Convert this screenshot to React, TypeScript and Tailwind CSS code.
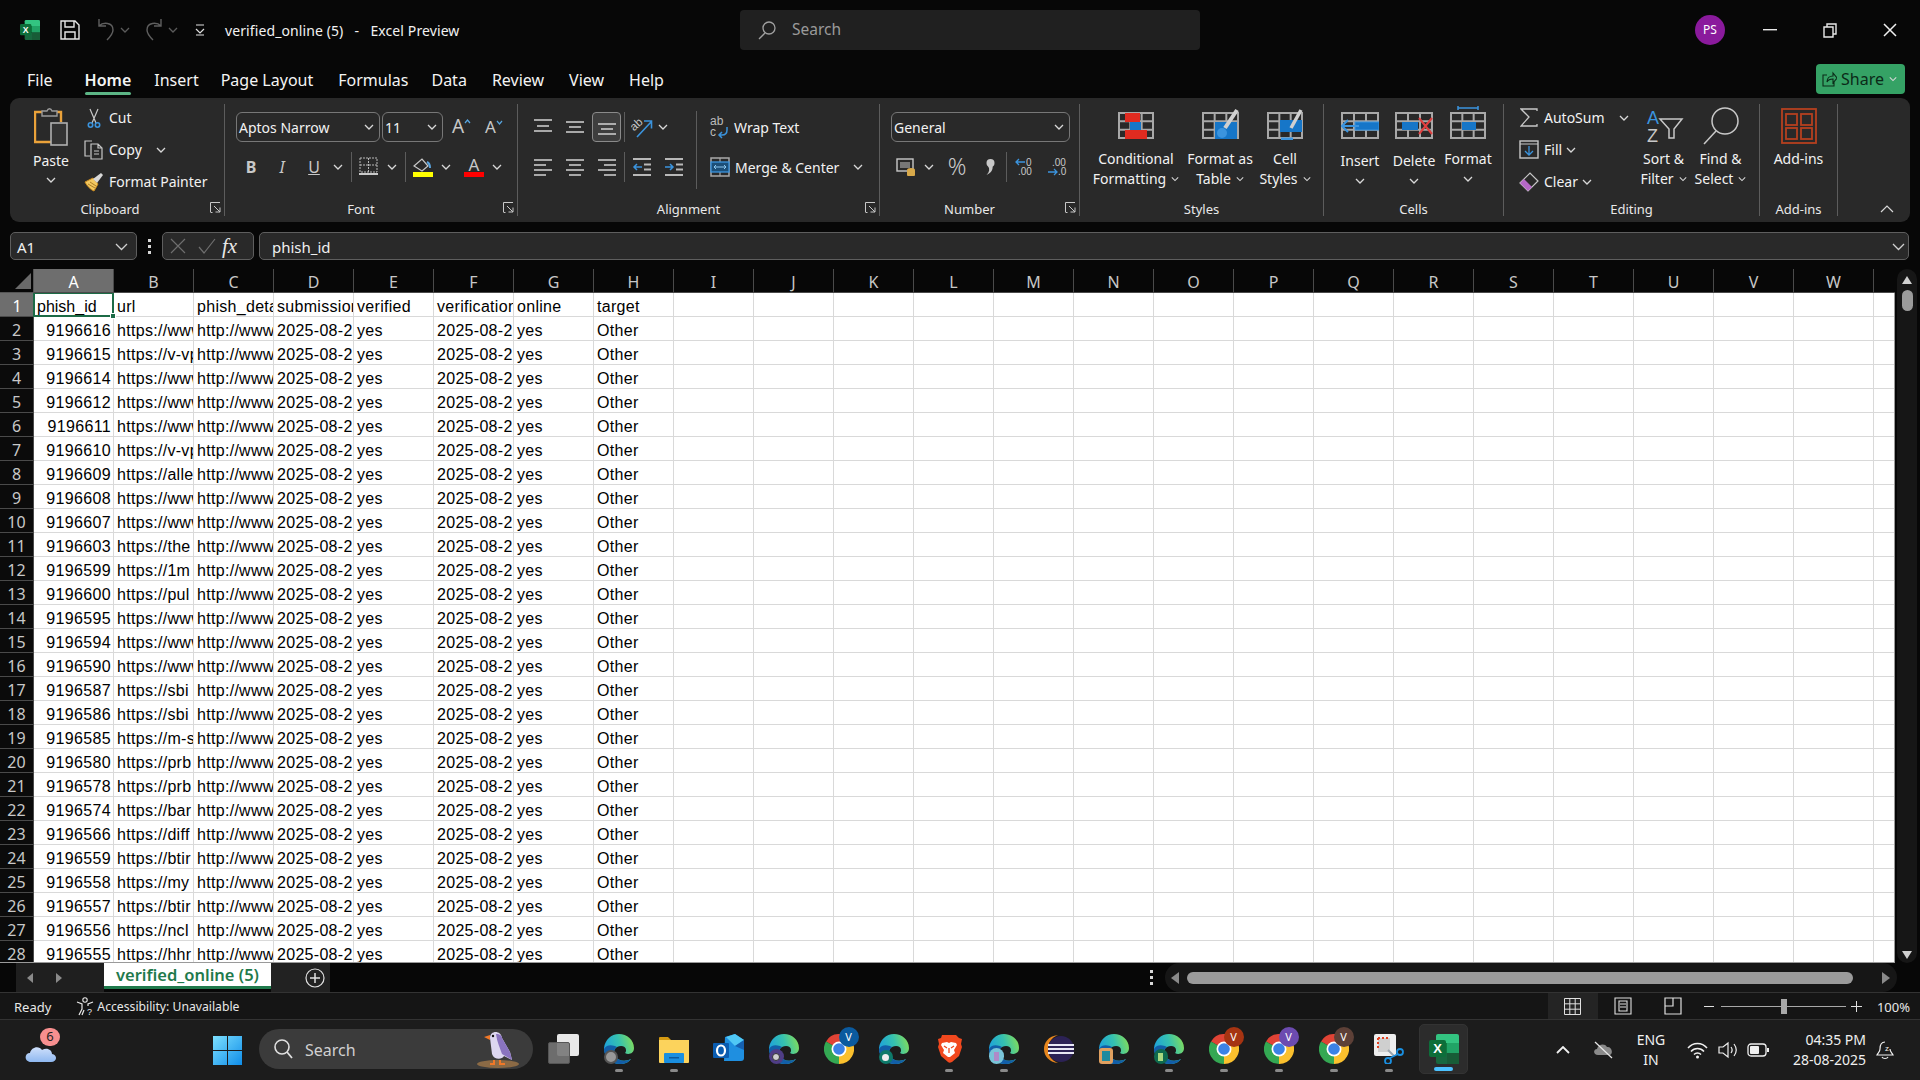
import type { ReactNode } from "react";

const rows: [string, string][] = [
  ["9196616", "https://www"], ["9196615", "https://v-vp"], ["9196614", "https://www"], ["9196612", "https://www"],
  ["9196611", "https://www"], ["9196610", "https://v-vp"], ["9196609", "https://alle"], ["9196608", "https://www"],
  ["9196607", "https://www"], ["9196603", "https://the"], ["9196599", "https://1m"], ["9196600", "https://pul"],
  ["9196595", "https://www"], ["9196594", "https://www"], ["9196590", "https://www"], ["9196587", "https://sbi"],
  ["9196586", "https://sbi"], ["9196585", "https://m-s"], ["9196580", "https://prb"], ["9196578", "https://prb"],
  ["9196574", "https://bar"], ["9196566", "https://diff"], ["9196559", "https://btir"], ["9196558", "https://my"],
  ["9196557", "https://btir"], ["9196556", "https://ncl"], ["9196555", "https://hhr"],
];
const headerCells = ["phish_id", "url", "phish_detail", "submission", "verified", "verification", "online", "target"];
const letters = "ABCDEFGHIJKLMNOPQRSTUVW".split("");
const blanks = Array.from({ length: 15 }, (_, i) => i);

function Chev({ className = "" }: { className?: string }) {
  return (
    <svg width="10" height="6" viewBox="0 0 10 6" className={className}>
      <path d="M1 1l4 4 4-4" fill="none" stroke="#d8d8d8" strokeWidth="1.3" />
    </svg>
  );
}

function ExcelLogo({ size = 20 }: { size?: number }) {
  return (
    <svg width={size} height={size} viewBox="0 0 30 30">
      <path d="M9 0h19a2 2 0 0 1 2 2v7H7V2a2 2 0 0 1 2-2z" fill="#33c481" />
      <rect x="18" y="9" width="12" height="10" fill="#21a366" />
      <rect x="7" y="9" width="11" height="10" fill="#107c41" />
      <rect x="18" y="19" width="12" height="11" fill="#185c37" />
      <path d="M7 19h11v11H9a2 2 0 0 1-2-2z" fill="#18683f" />
      <rect x="0" y="6" width="17" height="17" rx="2" fill="#0d6e3a" />
      <text x="8.5" y="19" textAnchor="middle" fontSize="13" fontWeight="700" fill="#fff" fontFamily="Liberation Sans">X</text>
    </svg>
  );
}

function Lines({ lines }: { lines: [number, number, number][] }) {
  return (
    <svg width="20" height="20" viewBox="0 0 20 20">
      {lines.map(([x1, x2, y]) => (
        <line key={y} x1={x1} x2={x2} y1={y} y2={y} stroke="#c8c8c8" strokeWidth="1.6" />
      ))}
    </svg>
  );
}

function GridBox({ children, w = 38, h = 30, stroke = "#a8a8a8" }: { children?: ReactNode; w?: number; h?: number; stroke?: string }) {
  return (
    <svg width={w} height={h + 6} viewBox={`0 -6 ${w} ${h + 6}`}>
      <g fill="none" stroke={stroke} strokeWidth="2">
        <rect x="1" y="1" width={w - 2} height={h - 3} />
        <path d={`M${(w - 2) / 3 + 1} 1V${h - 2}M${(2 * (w - 2)) / 3 + 1} 1V${h - 2}M1 ${(h - 3) / 3 + 1}H${w - 1}M1 ${(2 * (h - 3)) / 3 + 1}H${w - 1}`} />
      </g>
      {children}
    </svg>
  );
}

function Edge({ badge }: { badge: ReactNode }) {
  return (
    <div className="relative w-[30px] h-[30px]">
      <svg width="30" height="30" viewBox="0 0 30 30">
        <defs>
          <linearGradient id="edgeTop" x1="0" y1="0.6" x2="1" y2="0.3">
            <stop offset="0" stopColor="#1b9ee0" />
            <stop offset="0.55" stopColor="#35c1b0" />
            <stop offset="1" stopColor="#7fdc5e" />
          </linearGradient>
        </defs>
        <path d="M15 0C7 0 1 6 0 14c0 9 7 16 16 16 5 0 9-2 11-5-6 3-13 2-16-3-2-3-1-7 2-9 4-2 9-1 9 3 0 1 0 2-1 3 3 2 9 1 9-5C30 6 23 0 15 0z" fill="url(#edgeTop)" />
        <path d="M0 15c0 9 7 15 16 15 5 0 9-2 11-5-6 3-13 2-16-3-2-3-1-7 2-9C9 11 3 10 0 15z" fill="#125ea8" />
      </svg>
      <div className="absolute left-0 bottom-0">{badge}</div>
    </div>
  );
}

function Chrome({ badge, color }: { badge?: string; color?: string }) {
  return (
    <div className="relative w-[30px] h-[30px]">
      <svg width="30" height="30" viewBox="0 0 30 30">
        <path d="M15 15L2 7.5A15 15 0 0 1 28 7.5z" fill="#e04335" />
        <path d="M15 15L2 7.5A15 15 0 0 0 15 30z" fill="#34a853" />
        <path d="M15 15L28 7.5A15 15 0 0 1 15 30z" fill="#fbc02d" />
        <circle cx="15" cy="15" r="7.5" fill="#fff" />
        <circle cx="15" cy="15" r="5.8" fill="#3b82e6" />
      </svg>
      {badge && (
        <div className={`absolute -top-[7px] -right-[5px] w-[20px] h-[20px] rounded-full flex items-center justify-center text-[11px] text-white ${color}`}>
          {badge}
        </div>
      )}
    </div>
  );
}

function RibbonText({ children, className = "" }: { children: ReactNode; className?: string }) {
  return <span className={`text-[14px] text-[#f2f2f2] whitespace-nowrap ${className}`}>{children}</span>;
}

function Launcher() {
  return (
    <svg width="11" height="11" viewBox="0 0 11 11">
      <path d="M.5 10V.5H10M4 4l6 6M10 5.5V10H5.5M.5 10.5h2" fill="none" stroke="#c8c8c8" strokeWidth="1" />
    </svg>
  );
}

function Group({ w, label, launcher, pr = "", children }: { w: string; label: string; launcher?: boolean; pr?: string; children: ReactNode }) {
  return (
    <div className={`${w} h-[112px] border-r border-[#5c5c5c] flex flex-col shrink-0`}>
      <div className="h-[96px] shrink-0">{children}</div>
      <div className={`h-[18px] shrink-0 pt-[2px] flex items-center justify-center relative text-[13px] text-[#e8e8e8] ${pr}`}>
        {label}
        {launcher && (
          <div className="absolute right-[3px] top-[2px]">
            <Launcher />
          </div>
        )}
      </div>
    </div>
  );
}

function Combo({ w, children }: { w: string; children: string }) {
  return (
    <div className={`${w} h-[30px] rounded-[6px] border border-[#777] flex items-center justify-between pl-[2px] pr-[5px] pt-px`}>
      <RibbonText>{children}</RibbonText>
      <Chev />
    </div>
  );
}

function BigButton({ w, icon, lines, pt = "pt-[8px]", mt = "mt-[9px]" }: { w: string; icon: ReactNode; lines: ReactNode[]; pt?: string; mt?: string }) {
  return (
    <div className={`${w} flex flex-col items-center ${pt}`}>
      <div className="h-[28px] flex items-end">{icon}</div>
      <div className={`${mt} flex flex-col items-center leading-[20px]`}>
        {lines.map((l, i) => (
          <RibbonText key={i} className="leading-[20px] flex items-center gap-[5px]">{l}</RibbonText>
        ))}
      </div>
    </div>
  );
}

function TitleBar() {
  return (
    <div className="h-[60px] flex items-center">
      <div className="w-[740px] flex items-center pl-[20px]">
        <ExcelLogo />
        <svg width="20" height="20" viewBox="0 0 20 20" className="ml-[20px]">
          <path d="M1 1h14l4 4v14H1z M5 1v6h9V1 M5 19v-7h10v7" fill="none" stroke="#e8e8e8" strokeWidth="1.4" />
        </svg>
        <svg width="20" height="24" viewBox="0 0 20 24" className="ml-[16px]">
          <path d="M3 1v7h7 M3 8c4-4 14-4 14 4 0 4-3 7-6 10" fill="none" stroke="#5f5f5f" strokeWidth="1.4" />
        </svg>
        <Chev className="ml-[4px] opacity-40" />
        <svg width="20" height="24" viewBox="0 0 20 24" className="ml-[14px]">
          <path d="M17 1v7h-7 M17 8C13 4 3 4 3 12c0 4 3 7 6 10" fill="none" stroke="#5f5f5f" strokeWidth="1.4" />
        </svg>
        <Chev className="ml-[4px] opacity-40" />
        <svg width="10" height="12" viewBox="0 0 10 12" className="ml-[17px]">
          <path d="M1 1h8M1 5l4 4 4-4M1 11h8" fill="none" stroke="#e0e0e0" strokeWidth="1.2" />
        </svg>
        <span className="ml-[20px] pt-[2px] text-[14px] tracking-[0.1px] text-[#f2f2f2] whitespace-pre">verified_online (5)   -   Excel Preview</span>
      </div>
      <div className="w-[460px] h-[40px] rounded-[4px] bg-[#202020] flex items-center pl-[17px]">
        <svg width="20" height="20" viewBox="0 0 20 20">
          <circle cx="12" cy="8" r="6" fill="none" stroke="#a0a0a0" strokeWidth="1.3" />
          <path d="M8 13l-6 6" stroke="#a0a0a0" strokeWidth="1.3" />
        </svg>
        <span className="ml-[15px] text-[15.5px] text-[#9a9a9a]">Search</span>
      </div>
      <div className="flex-1 flex items-center pl-[495px]">
        <div className="w-[30px] h-[30px] rounded-full bg-[#8a1a9c] flex items-center justify-center text-[12px] text-white">PS</div>
        <svg width="14" height="2" viewBox="0 0 14 2" className="ml-[38px]">
          <rect width="14" height="1.4" fill="#e8e8e8" />
        </svg>
        <svg width="14" height="16" viewBox="0 0 14 16" className="ml-[46px]">
          <path d="M1 5h9v10H1z M4 5V2h9v10h-3" fill="none" stroke="#e8e8e8" strokeWidth="1.4" />
        </svg>
        <svg width="14" height="14" viewBox="0 0 14 14" className="ml-[46px]">
          <path d="M1 1l12 12M13 1L1 13" stroke="#f0f0f0" strokeWidth="1.5" />
        </svg>
      </div>
    </div>
  );
}

function TabRow() {
  const tabs: [string, string][] = [
    ["File", "ml-[27px]"], ["Home", "ml-[32px] font-semibold"], ["Insert", "ml-[23px]"], ["Page Layout", "ml-[22px]"],
    ["Formulas", "ml-[25px]"], ["Data", "ml-[23px]"], ["Review", "ml-[25px]"], ["View", "ml-[25px]"], ["Help", "ml-[25px]"],
  ];
  return (
    <div className="h-[38px] flex">
      {tabs.map(([t, c]) => (
        <div key={t} className={`${c} h-[35px] pt-[6px] flex items-center text-[16px] text-[#f4f4f4] relative`}>
          {t}
          {t === "Home" && <div className="absolute left-0 right-0 bottom-0 h-[3px] bg-[#5cb585] rounded-sm" />}
        </div>
      ))}
      <div className="ml-auto mr-[15px] mt-[4px] w-[89px] h-[30px] rounded-[4px] bg-[#35a265] flex items-center pl-[6px]">
        <svg width="15" height="16" viewBox="0 0 15 16">
          <path d="M5 4H1v11h11v-4M5 11c0-4 3-6 6-6V2l4 5-4 5V8c-3 0-5 1-6 3z" fill="none" stroke="#0b2a18" strokeWidth="1.1" />
        </svg>
        <span className="ml-[4px] text-[16px] text-[#0b2a18]">Share</span>
        <Chev className="ml-[5px] w-[8px]" />
      </div>
    </div>
  );
}

function SmallRow({ icon, children, after }: { icon: ReactNode; children: string; after?: ReactNode }) {
  return (
    <div className="h-[28px] flex items-center">
      <div className="w-[20px] flex justify-center">{icon}</div>
      <RibbonText className="ml-[5px]">{children}</RibbonText>
      {after}
    </div>
  );
}

function Ribbon() {
  return (
    <div className="mx-[10px] h-[124px] rounded-[9px] bg-[#292929] py-[6px] flex">
      <Group w="w-[215px]" label="Clipboard" launcher pr="pr-[14px]">
        <div className="flex">
          <div className="ml-[17px] w-[48px] flex flex-col items-center pt-[4px]">
            <svg width="34" height="38" viewBox="0 0 34 38">
              <path d="M9 4H1v30h16" fill="none" stroke="#eaa23a" strokeWidth="2.4" />
              <path d="M22 4h5v10" fill="none" stroke="#eaa23a" strokeWidth="2.4" />
              <path d="M8 8V3h5c1-3 4-3 5 0h5v5z" fill="#292929" stroke="#9a9a9a" strokeWidth="1.4" />
              <rect x="17" y="15" width="16" height="22" fill="#333" stroke="#b0b0b0" strokeWidth="1.6" />
            </svg>
            <RibbonText className="mt-[6px] leading-[18px]">Paste</RibbonText>
            <Chev className="mt-[7px]" />
          </div>
          <div className="ml-[9px] flex flex-col gap-1">
            <SmallRow icon={
              <svg width="14" height="20" viewBox="0 0 14 20">
                <path d="M3 1l6 14M11 1L5 15" stroke="#c8c8c8" strokeWidth="1.2" />
                <circle cx="3.5" cy="17" r="2.2" fill="none" stroke="#3b94de" strokeWidth="1.6" />
                <circle cx="10.5" cy="17" r="2.2" fill="none" stroke="#3b94de" strokeWidth="1.6" />
              </svg>
            }>Cut</SmallRow>
            <SmallRow icon={
              <svg width="20" height="20" viewBox="0 0 20 20">
                <path d="M8 1H1v15h5" fill="none" stroke="#c8c8c8" strokeWidth="1.2" />
                <path d="M7 4h7l4 4v11H7zM10 11h5M10 14h5M14 4v4h4" fill="none" stroke="#c8c8c8" strokeWidth="1.2" />
              </svg>
            } after={<Chev className="ml-[14px]" />}>Copy</SmallRow>
            <SmallRow icon={
              <svg width="20" height="20" viewBox="0 0 20 20">
                <path d="M1 10l8-4 5 6-4 7c-3-1-7-5-9-9z" fill="#f3c860" stroke="#c98a1e" strokeWidth="1" />
                <path d="M4 12l7 4M6 10l6 4" stroke="#9a6a18" strokeWidth=".8" />
                <path d="M9 7l8-6 2 2-6 8z" fill="#d8d8d8" />
              </svg>
            }>Format Painter</SmallRow>
          </div>
        </div>
      </Group>

      <Group w="w-[293px]" label="Font" launcher pr="pr-[20px]">
        <div className="flex pt-[8px] pl-[11px] items-center">
          <Combo w="w-[144px]">Aptos Narrow</Combo>
          <Combo w="w-[61px] ml-[2px]">11</Combo>
          <div className="ml-[9px] w-[20px] flex items-start text-[19px] leading-none text-[#c8c8c8]">
            A
            <svg width="7" height="5" viewBox="0 0 7 5" className="mt-[2px]"><path d="M1 4l2.5-3L6 4" fill="none" stroke="#58a6e0" strokeWidth="1.2" /></svg>
          </div>
          <div className="ml-[13px] w-[18px] flex items-start text-[17px] leading-none text-[#c8c8c8]">
            A
            <svg width="7" height="5" viewBox="0 0 7 5" className="mt-[2px]"><path d="M1 1l2.5 3L6 1" fill="none" stroke="#58a6e0" strokeWidth="1.2" /></svg>
          </div>
        </div>
        <div className="flex mt-[10px] pl-[11px] h-[30px] items-center">
          <div className="w-[30px] text-center text-[16px] font-bold text-[#c8c8c8]">B</div>
          <div className="w-[32px] text-center text-[16px] italic text-[#c8c8c8]">I</div>
          <div className="w-[32px] text-center text-[16px] text-[#c8c8c8] underline">U</div>
          <div className="w-[16px] flex justify-center"><Chev /></div>
          <div className="ml-[5px] w-px h-[30px] bg-[#5c5c5c]" />
          <svg width="19" height="19" viewBox="0 0 19 19" className="ml-[7px]">
            <path d="M1 1h17v14H1zM9.5 1v14M1 8h17" fill="none" stroke="#b8b8b8" strokeWidth="1" strokeDasharray="2 1" />
            <rect x="0" y="16" width="19" height="2" fill="#c8c8c8" />
          </svg>
          <div className="ml-[6px] w-[16px] flex justify-center"><Chev /></div>
          <div className="ml-[5px] w-px h-[30px] bg-[#5c5c5c]" />
          <svg width="20" height="20" viewBox="0 0 20 20" className="ml-[7px]">
            <path d="M1 9l8-7 6 7-6 5z" fill="none" stroke="#c8c8c8" strokeWidth="1.2" />
            <path d="M14 5c2 1 3 3 3 6" fill="none" stroke="#5aa5e0" strokeWidth="2" />
            <rect x="0" y="15" width="20" height="5" fill="#ffff00" />
          </svg>
          <div className="ml-[5px] w-[16px] flex justify-center"><Chev /></div>
          <div className="ml-[10px] w-[20px] h-[20px] relative text-center text-[17px] leading-[15px] text-[#c8c8c8]">
            A
            <div className="absolute left-0 right-0 bottom-0 h-[5px] bg-[#ff0000]" />
          </div>
          <div className="ml-[5px] w-[16px] flex justify-center"><Chev /></div>
        </div>
      </Group>

      <Group w="w-[362px]" label="Alignment" launcher pr="pr-[20px]">
        <div className="flex h-[96px]">
          <div className="w-[178px]">
            <div className="flex pt-[8px] pl-[9px] items-center">
              <div className="w-[32px] h-[30px] flex justify-center items-center"><Lines lines={[[1, 19, 3], [4, 16, 9], [1, 19, 14]]} /></div>
              <div className="w-[32px] h-[30px] flex justify-center items-center"><Lines lines={[[1, 19, 5], [4, 16, 10], [1, 19, 15]]} /></div>
              <div className="ml-px w-[29px] h-[30px] rounded-[4px] border border-[#8a8a8a] bg-[#3e3e3e] flex justify-center items-center"><Lines lines={[[1, 19, 7], [4, 16, 12], [1, 19, 17]]} /></div>
              <div className="ml-[3px] w-px h-[30px] bg-[#5c5c5c]" />
              <svg width="22" height="22" viewBox="0 0 22 22" className="ml-[6px]">
                <text x="0" y="12" fontSize="11.500" fill="#c8c8c8" fontFamily="Liberation Sans" transform="rotate(-42 6 10)">ab</text>
                <path d="M6 21L20 6M13 5h7.500v7.500" stroke="#3b94de" strokeWidth="1.6" fill="none" />
              </svg>
              <Chev className="ml-[5px]" />
            </div>
            <div className="flex mt-[10px] pl-[9px] items-center h-[30px]">
              <div className="w-[32px] flex justify-center"><Lines lines={[[1, 19, 3], [1, 13, 8], [1, 19, 13], [1, 13, 18]]} /></div>
              <div className="w-[32px] flex justify-center"><Lines lines={[[1, 19, 3], [4, 16, 8], [1, 19, 13], [4, 16, 18]]} /></div>
              <div className="w-[32px] flex justify-center"><Lines lines={[[1, 19, 3], [7, 19, 8], [1, 19, 13], [7, 19, 18]]} /></div>
              <div className="ml-px w-px h-[30px] bg-[#5c5c5c]" />
              <svg width="20" height="20" viewBox="0 0 20 20" className="ml-[7px]">
                <path d="M1 2h18M12 7.500h7M12 12.500h7M1 18h18" stroke="#b8b8b8" strokeWidth="1.800" />
                <path d="M10 10H2M5 7l-3 3 3 3" fill="none" stroke="#3b94de" strokeWidth="1.500" />
              </svg>
              <svg width="20" height="20" viewBox="0 0 20 20" className="ml-[12px]">
                <path d="M1 2h18M12 7.500h7M12 12.500h7M1 18h18" stroke="#b8b8b8" strokeWidth="1.800" />
                <path d="M1 10h8M6 7l3 3-3 3" fill="none" stroke="#3b94de" strokeWidth="1.500" />
              </svg>
            </div>
          </div>
          <div className="mt-[7px] w-px h-[78px] bg-[#5c5c5c]" />
          <div className="ml-[12px]">
            <div className="flex pt-[8px] h-[38px] items-center">
              <svg width="22" height="24" viewBox="0 0 22 24">
                <text x="1" y="10" fontSize="12" fill="#bcbcbc" fontFamily="Liberation Sans">ab</text>
                <text x="1" y="21" fontSize="12" fill="#bcbcbc" fontFamily="Liberation Sans">c</text>
                <path d="M18 12v3c0 3-2 5-5 5h-3M13 17l-3 3 3 3" fill="none" stroke="#3b94de" strokeWidth="1.500" />
              </svg>
              <RibbonText className="ml-[3px] pt-[2px]">Wrap Text</RibbonText>
            </div>
            <div className="flex mt-[10px] h-[30px] items-center">
              <svg width="20" height="20" viewBox="0 0 20 20" className="ml-px">
                <rect x="1" y="1" width="18" height="18" fill="none" stroke="#a8a8a8" strokeWidth="1.500" />
                <path d="M10 1v4M10 15v4" stroke="#a8a8a8" strokeWidth="1.200" />
                <rect x="1" y="5" width="18" height="10" fill="#1c4f78" stroke="#3b94de" strokeWidth="1.300" />
                <path d="M4 10h12M6 8l-2 2 2 2M14 8l2 2-2 2" fill="none" stroke="#8cc8f0" strokeWidth="1" />
              </svg>
              <RibbonText className="ml-[5px] pt-[2px] text-[14.5px]">Merge &amp; Center</RibbonText>
              <Chev className="ml-[14px]" />
            </div>
          </div>
        </div>
      </Group>

      <Group w="w-[200px]" label="Number" launcher pr="pr-[20px]">
        <div className="pt-[8px] pl-[11px]"><Combo w="w-[179px]">General</Combo></div>
        <div className="flex mt-[10px] h-[30px] items-center">
          <svg width="20" height="20" viewBox="0 0 20 20" className="ml-[16px]">
            <rect x="1" y="2" width="16" height="12" fill="none" stroke="#c8c8c8" strokeWidth="1.4" />
            <rect x="4" y="5" width="10" height="6" fill="#777" />
            <ellipse cx="15" cy="13" rx="4" ry="2" fill="#d8a94a" />
            <rect x="11" y="13" width="8" height="6" rx="1" fill="#d8a94a" />
          </svg>
          <div className="ml-[5px] w-[16px] flex justify-center"><Chev /></div>
          <div className="ml-[10px] w-[20px] text-center text-[23px] font-light leading-none text-[#c8c8c8]">%</div>
          <svg width="11" height="20" viewBox="0 0 11 20" className="ml-[18px]">
            <circle cx="5.500" cy="6" r="4" fill="#c8c8c8" />
            <path d="M6.500 6c3 5 0 10-5 12 3-3 3.500-6 1.500-9z" fill="#c8c8c8" />
          </svg>
          <div className="ml-[10px] w-px h-[30px] bg-[#5c5c5c]" />
          <svg width="20" height="20" viewBox="0 0 20 20" className="ml-[8px]">
            <text x="11" y="8.500" fontSize="10" fill="#c8c8c8" fontFamily="Liberation Sans">0</text>
            <text x="3" y="18" fontSize="10" fill="#c8c8c8" fontFamily="Liberation Sans">.00</text>
            <path d="M10 5H1M4 2L1 5l3 3" fill="none" stroke="#3b94de" strokeWidth="1.3" />
          </svg>
          <svg width="20" height="20" viewBox="0 0 20 20" className="ml-[12px]">
            <text x="5" y="8.500" fontSize="10" fill="#c8c8c8" fontFamily="Liberation Sans">.00</text>
            <text x="11" y="18" fontSize="10" fill="#c8c8c8" fontFamily="Liberation Sans">.0</text>
            <path d="M1 15h9M7 12l3 3-3 3" fill="none" stroke="#3b94de" strokeWidth="1.3" />
          </svg>
        </div>
      </Group>

      <Group w="w-[244px]" label="Styles">
        <div className="flex pl-[8px]">
          <BigButton w="w-[96px]" icon={
            <GridBox w={36} h={28}>
              <rect x="7" y="1" width="15" height="9" fill="#e02b20" />
              <rect x="12" y="10" width="11" height="8" fill="#1676c8" />
              <rect x="7" y="18" width="22" height="9" fill="#e02b20" />
            </GridBox>
          } lines={["Conditional", <>Formatting <Chev className="w-[8px]" /></>]} />
          <BigButton w="w-[72px]" icon={
            <GridBox w={37} h={28}>
              <rect x="13" y="10" width="22" height="17" fill="#1676c8" />
              <path d="M35-2L23 16" stroke="#d0d0d0" strokeWidth="4" />
              <circle cx="20" cy="21" r="5" fill="#3b94de" />
            </GridBox>
          } lines={["Format as", <>Table <Chev className="w-[8px]" /></>]} />
          <BigButton w="w-[58px]" icon={
            <GridBox w={36} h={28}>
              <rect x="13" y="8" width="22" height="12" fill="#1676c8" />
              <path d="M34-2L24 16" stroke="#d0d0d0" strokeWidth="3.5" />
              <path d="M14 27h12" stroke="#3b94de" strokeWidth="3" />
            </GridBox>
          } lines={["Cell", <>Styles <Chev className="w-[8px]" /></>]} />
        </div>
      </Group>

      <Group w="w-[180px]" label="Cells">
        <div className="flex pl-[9px]">
          <BigButton w="w-[54px]" mt="mt-[11px]" icon={
            <GridBox w={38} h={28}>
              <rect x="14" y="10" width="24" height="8" fill="#1676c8" stroke="#3b94de" />
              <path d="M18 14H1M7 8l-6 6 6 6" fill="none" stroke="#3b94de" strokeWidth="2" />
            </GridBox>
          } lines={["Insert", <Chev className="mt-[7px]" />]} />
          <BigButton w="w-[54px]" mt="mt-[11px]" icon={
            <GridBox w={38} h={28}>
              <rect x="7" y="10" width="16" height="8" fill="#1676c8" />
              <path d="M24 6l13 16M37 6L24 22" stroke="#e04040" strokeWidth="2" />
            </GridBox>
          } lines={["Delete", <Chev className="mt-[7px]" />]} />
          <BigButton w="w-[54px]" icon={
            <GridBox w={36} h={28}>
              <rect x="12" y="10" width="14" height="8" fill="#1676c8" />
              <path d="M8-4H28M8-6V-2M28-6V-2" stroke="#3b94de" strokeWidth="1.5" fill="none" />
            </GridBox>
          } lines={["Format", <Chev className="mt-[7px]" />]} />
        </div>
      </Group>

      <Group w="w-[256px]" label="Editing">
        <div className="flex">
          <div className="ml-[15px] w-[117px] flex flex-col gap-1">
            <SmallRow icon={
              <svg width="18" height="19" viewBox="0 0 18 19">
                <path d="M17 3V1H1l8 8-8 9h16v-2" fill="none" stroke="#c8c8c8" strokeWidth="1.3" />
              </svg>
            } after={<Chev className="ml-[14px]" />}>AutoSum</SmallRow>
            <SmallRow icon={
              <svg width="20" height="19" viewBox="0 0 20 19">
                <rect x="1" y="1" width="18" height="17" fill="none" stroke="#c8c8c8" strokeWidth="1.4" />
                <path d="M1 4h18" stroke="#c8c8c8" />
                <path d="M10 6v9M6 11l4 4 4-4" fill="none" stroke="#3b94de" strokeWidth="1.3" />
              </svg>
            } after={<Chev className="ml-[4px]" />}>Fill</SmallRow>
            <SmallRow icon={
              <svg width="20" height="20" viewBox="0 0 20 20">
                <path d="M1 11L11 1l8 8-10 10z" fill="none" stroke="#c8c8c8" strokeWidth="1.2" />
                <path d="M1 11l4-4 8 8-4 4z" fill="#b668c8" />
              </svg>
            } after={<Chev className="ml-[4px]" />}>Clear</SmallRow>
          </div>
          <BigButton w="w-[55px]" pt="pt-[11px]" mt="mt-[6px]" icon={
            <svg width="38" height="34" viewBox="0 0 38 34" className="overflow-visible">
              <text x="2" y="15" fontSize="18" fill="#3b94de" fontFamily="Liberation Sans">A</text>
              <text x="2" y="33" fontSize="18" fill="#c8c8c8" fontFamily="Liberation Sans">Z</text>
              <path d="M15 10h22l-8 10v9h-5v-9z" fill="none" stroke="#c8c8c8" strokeWidth="1.5" />
            </svg>
          } lines={["Sort &", <>Filter <Chev className="w-[8px]" /></>]} />
          <BigButton w="w-[59px]" pt="pt-[13px]" mt="mt-[4px]" icon={
            <svg width="38" height="38" viewBox="0 0 38 38" className="overflow-visible">
              <circle cx="23" cy="14" r="13" fill="none" stroke="#c8c8c8" strokeWidth="1.5" />
              <path d="M14 24L2 37" stroke="#c8c8c8" strokeWidth="1.5" />
            </svg>
          } lines={["Find &", <>Select <Chev className="w-[8px]" /></>]} />
        </div>
      </Group>

      <Group w="w-[78px]" label="Add-ins">
        <BigButton w="w-full" pt="pt-[12px]" mt="mt-[5px]" icon={
          <svg width="36" height="36" viewBox="0 0 36 36">
            <g fill="none" stroke="#b5401f" strokeWidth="1.8">
              <rect x="1" y="1" width="34" height="34" />
              <rect x="5" y="6" width="11" height="11" />
              <rect x="20" y="6" width="11" height="11" />
              <rect x="5" y="20" width="11" height="11" />
              <rect x="20" y="20" width="11" height="11" />
            </g>
          </svg>
        } lines={["Add-ins"]} />
      </Group>

      <div className="flex-1 flex justify-end items-end pb-[3px] pr-[16px]">
        <svg width="14" height="8" viewBox="0 0 14 8"><path d="M1 7l6-6 6 6" fill="none" stroke="#d8d8d8" strokeWidth="1.2" /></svg>
      </div>
    </div>
  );
}

function FormulaBar() {
  return (
    <div className="mt-[10px] h-[29px] flex items-center">
      <div className="ml-[10px] w-[127px] h-full rounded-[5px] border border-[#5e5e5e] bg-[#292929] flex items-center justify-between pl-[6px] pr-[8px] pt-[2px] text-[15px] text-[#f0f0f0]">
        A1
        <svg width="13" height="8" viewBox="0 0 13 8"><path d="M1 1l5.500 5.500L12 1" fill="none" stroke="#d0d0d0" strokeWidth="1.3" /></svg>
      </div>
      <div className="w-[25px] flex flex-col items-center gap-[3px]">
        <div className="w-[3px] h-[3px] bg-[#d8d8d8]" />
        <div className="w-[3px] h-[3px] bg-[#d8d8d8]" />
        <div className="w-[3px] h-[3px] bg-[#d8d8d8]" />
      </div>
      <div className="w-[92px] h-full rounded-[5px] border border-[#5e5e5e] bg-[#292929] flex items-center pl-[7px]">
        <svg width="16" height="16" viewBox="0 0 16 16"><path d="M1 1l14 14M15 1L1 15" stroke="#6e6e6e" strokeWidth="1.2" /></svg>
        <svg width="18" height="16" viewBox="0 0 18 16" className="ml-[12px]"><path d="M1 9l5 6L17 1" fill="none" stroke="#6e6e6e" strokeWidth="1.2" /></svg>
        <span className="ml-[6px] italic text-[21px] leading-none font-['Liberation_Serif',serif] text-[#e8e8e8]">fx</span>
      </div>
      <div className="ml-[5px] w-[1650px] h-full rounded-[5px] border border-[#5e5e5e] bg-[#292929] flex items-center justify-between pl-[12px] pr-[3px] pt-[2px] text-[15px] text-[#f0f0f0]">
        phish_id
        <svg width="13" height="8" viewBox="0 0 13 8"><path d="M1 1l5.500 5.500L12 1" fill="none" stroke="#d0d0d0" strokeWidth="1.3" /></svg>
      </div>
    </div>
  );
}

function Cell({ children, right }: { children?: ReactNode; right?: boolean }) {
  return (
    <div className={`w-20 h-full shrink-0 border-r border-b border-[#d9d9d9] overflow-hidden whitespace-nowrap pt-px leading-[25px] ${right ? "text-right pr-[2px] tracking-[0.35px]" : "pl-[3px] tracking-[0.3px]"}`}>
      {children}
    </div>
  );
}

function Sheet() {
  return (
    <div className="mt-[9px] h-[694px] flex">
      <div className="w-[1895px] flex flex-col">
        <div className="h-[24px] flex">
          <div className="w-[34px] flex justify-end items-end pb-[3px] pr-[2px] border-r border-b border-[#555]">
            <div className="w-0 h-0 border-l-[16px] border-l-transparent border-b-[16px] border-b-[#6a6a6a]" />
          </div>
          {letters.map((l, i) => (
            <div key={l} className={`w-20 shrink-0 border-r border-b border-[#4a4a4a] flex items-center justify-center pt-[2px] text-[16px] font-['Noto_Sans',sans-serif] ${i === 0 ? "bg-[#6e6e6e] text-white" : "text-[#c8c8c8]"}`}>
              {l}
            </div>
          ))}
          <div className="flex-1 border-b border-[#4a4a4a]" />
        </div>
        <div className="h-[670px] overflow-hidden border-r border-b border-[#9a9a9a] font-['Liberation_Sans',sans-serif] text-[16px] text-black">
          <div className="h-6 flex bg-white">
            <div className="w-[34px] shrink-0 bg-[#6e6e6e] text-white flex items-center justify-center pt-[2px] text-[16px] font-['Noto_Sans',sans-serif] border-b border-[#4a4a4a]">1</div>
            {headerCells.map((h, i) => (
              <div key={h} className={`w-20 h-full shrink-0 border-r border-b border-[#d9d9d9] whitespace-nowrap pt-px leading-[25px] pl-[3px] ${i === 0 ? "relative" : "overflow-hidden tracking-[0.3px]"}`}>
                {i === 0 ? (
                  <>
                    <div className="overflow-hidden">{h}</div>
                    <div className="absolute -left-px -top-px w-[81px] h-[25px] border-2 border-[#1c6b46]" />
                    <div className="absolute -right-[3px] -bottom-[3px] w-[6px] h-[6px] bg-[#1c6b46] border border-white" />
                  </>
                ) : h}
              </div>
            ))}
            {blanks.map((b) => <Cell key={b} />)}
            <div className="flex-1 border-b border-[#d9d9d9]" />
          </div>
          {rows.map(([id, url], i) => (
            <div key={id} className="h-6 flex bg-white">
              <div className="w-[34px] shrink-0 bg-[#0b0b0b] text-[#c8c8c8] flex items-center justify-center pt-[2px] text-[16px] font-['Noto_Sans',sans-serif] border-r border-b border-[#4a4a4a]">{i + 2}</div>
              <Cell right>{id}</Cell>
              <Cell>{url}</Cell>
              <Cell>http://www</Cell>
              <Cell>2025-08-28</Cell>
              <Cell>yes</Cell>
              <Cell>2025-08-28</Cell>
              <Cell>yes</Cell>
              <Cell>Other</Cell>
              {blanks.map((b) => <Cell key={b} />)}
              <div className="flex-1 border-b border-[#d9d9d9]" />
            </div>
          ))}
        </div>
      </div>
      <div className="ml-[2px] w-[20px] bg-[#161616] rounded-full flex flex-col items-center pt-[7px]">
        <div className="w-0 h-0 border-x-[5.500px] border-x-transparent border-b-[8px] border-b-[#d0d0d0]" />
        <div className="mt-[6px] w-[11px] h-[21px] rounded-full bg-[#9b9b9b]" />
        <div className="mt-auto mb-[4px] w-0 h-0 border-x-[5.500px] border-x-transparent border-t-[8px] border-t-[#d0d0d0]" />
      </div>
    </div>
  );
}

function SheetBar() {
  return (
    <div className="h-[29px] flex items-start">
      <div className="ml-[16px] w-[88px] h-full bg-[#1f1f1f] flex items-center pl-[11px]">
        <div className="w-0 h-0 border-y-[5px] border-y-transparent border-r-[6px] border-r-[#8a8a8a]" />
        <div className="ml-[23px] w-0 h-0 border-y-[5px] border-y-transparent border-l-[6px] border-l-[#8a8a8a]" />
      </div>
      <div className="w-[167px] h-[26px] bg-white border-b-[3px] border-[#1f7a4c] flex items-center justify-center text-[16.500px] font-semibold text-[#1f7a4c]">verified_online (5)</div>
      <div className="w-[59px] h-full bg-[#222] flex items-center justify-end pr-[5px]">
        <svg width="20" height="20" viewBox="0 0 20 20">
          <circle cx="10" cy="10" r="9" fill="none" stroke="#e0e0e0" strokeWidth="1.2" />
          <path d="M10 5v10M5 10h10" stroke="#e0e0e0" strokeWidth="1.5" />
        </svg>
      </div>
      <div className="ml-[820px] h-full flex flex-col justify-center gap-[3px]">
        <div className="w-[3px] h-[3px] bg-[#d8d8d8]" />
        <div className="w-[3px] h-[3px] bg-[#d8d8d8]" />
        <div className="w-[3px] h-[3px] bg-[#d8d8d8]" />
      </div>
      <div className="ml-[12px] w-[732px] h-full rounded-full bg-[#161616] flex items-center pl-[6px]">
        <div className="w-0 h-0 border-y-[6px] border-y-transparent border-r-[8px] border-r-[#8a8a8a]" />
        <div className="ml-[8px] w-[666px] h-[12px] rounded-full bg-[#9b9b9b]" />
        <div className="ml-[29px] w-0 h-0 border-y-[6px] border-y-transparent border-l-[8px] border-l-[#8a8a8a]" />
      </div>
    </div>
  );
}

function StatusBar() {
  return (
    <div className="h-[28px] bg-[#151515] border-y border-[#333] flex items-center text-[13px] text-[#e8e8e8]">
      <span className="ml-[14px] pt-[2px]">Ready</span>
      <svg width="19" height="19" viewBox="0 0 19 19" className="ml-[25px]">
        <circle cx="9" cy="3" r="2.200" fill="none" stroke="#e8e8e8" strokeWidth="1.1" />
        <path d="M1 5l5 2v5l-3 6M17 5l-5 2v2M8 13l-2 5" fill="none" stroke="#e8e8e8" strokeWidth="1.2" />
        <text x="11" y="18" fontSize="9" fill="#e8e8e8" fontFamily="Liberation Sans">?</text>
      </svg>
      <span className="ml-[2px] pt-[2px] text-[12.200px]">Accessibility: Unavailable</span>
      <div className="ml-auto w-[50px] h-full bg-[#242424] flex items-center justify-center">
        <svg width="17" height="17" viewBox="0 0 17 17">
          <path d="M.5.500h16v16H.500zM5.800.500v16M11.200.500v16M.500 5.800h16M.500 11.200h16" fill="none" stroke="#e0e0e0" />
        </svg>
      </div>
      <svg width="18" height="18" viewBox="0 0 18 18" className="ml-[16px]">
        <path d="M1 1h16v16H1zM5 4h8v10H5zM6 7h6M6 10h6" fill="none" stroke="#e0e0e0" strokeWidth="1.1" />
      </svg>
      <svg width="18" height="18" viewBox="0 0 18 18" className="ml-[32px]">
        <path d="M1 1h16v16H1zM9 1v8H1" fill="none" stroke="#e0e0e0" strokeWidth="1.2" />
      </svg>
      <div className="ml-[22px] w-[10px] h-px bg-[#e0e0e0]" />
      <div className="ml-[7px] w-[125px] h-px bg-[#a8a8a8] flex items-center pl-[60px]">
        <div className="w-[6px] h-[15px] bg-[#a8a8a8]" />
      </div>
      <svg width="11" height="11" viewBox="0 0 11 11" className="ml-[5px]"><path d="M5.500 0v11M0 5.500h11" stroke="#e0e0e0" /></svg>
      <span className="ml-[15px] mr-[10px] pt-[2px] text-[13px]">100%</span>
    </div>
  );
}

function Slot({ children, dot }: { children: ReactNode; dot?: boolean }) {
  return (
    <div className="w-[55px] shrink-0 flex flex-col items-center pt-[14px]">
      <div className="h-[30px]">{children}</div>
      {dot && <div className="mt-[5px] w-[8px] h-[3px] rounded-full bg-[#8a8a8a]" />}
    </div>
  );
}

function Taskbar() {
  return (
    <div className="h-[60px] bg-[#1c1c1c] flex text-[#f0f0f0] font-['Noto_Sans',sans-serif]">
      <div className="w-[200px] relative">
        <svg width="32" height="22" viewBox="0 0 32 22" className="ml-[25px] mt-[21px]">
          <defs>
            <linearGradient id="cloud" x1="0" y1="0" x2="0" y2="1">
              <stop offset="0" stopColor="#cfe0fb" />
              <stop offset="1" stopColor="#8fb8f0" />
            </linearGradient>
          </defs>
          <path d="M6 21c-7 0-7-9-1-9 1-6 9-8 12-3 5-3 10 0 10 4 6 1 5 8-1 8z" fill="url(#cloud)" />
        </svg>
        <div className="absolute left-[40px] top-[8px] w-[20px] h-[18px] rounded-full bg-[#f78f8f] flex items-center justify-center text-[13px] text-[#222]">6</div>
      </div>
      <div className="w-[55px] flex items-center justify-center">
        <svg width="29" height="29" viewBox="0 0 29 29">
          <defs>
            <linearGradient id="win" x1="0" y1="0" x2="1" y2="1">
              <stop offset="0" stopColor="#7de0ff" />
              <stop offset="1" stopColor="#0f8de8" />
            </linearGradient>
          </defs>
          <path d="M0 0h14v14H0zM15 0h14v14H15zM0 15h14v14H0zM15 15h14v14H15z" fill="url(#win)" />
        </svg>
      </div>
      <div className="ml-[4px] mt-[9px] w-[274px] h-[40px] rounded-full bg-[#3b3b3b] flex items-center pl-[15px]">
        <svg width="19" height="20" viewBox="0 0 19 20">
          <circle cx="8" cy="8" r="7" fill="none" stroke="#e0e0e0" strokeWidth="1.6" />
          <path d="M13 13l5 6" stroke="#e0e0e0" strokeWidth="1.8" />
        </svg>
        <span className="ml-[12px] pt-[2px] text-[16px] text-[#d0d0d0]">Search</span>
        <svg width="44" height="38" viewBox="0 0 44 38" className="ml-[120px]">
          <ellipse cx="22" cy="34" rx="21" ry="4" fill="#8b6a45" />
          <path d="M14 8c0-8 11-8 12 0l8 14 2 8-8-4c-2 4-10 4-12-2z" fill="#dcd6f0" />
          <path d="M20 4c4 0 6 2 6 4l8 14 2 8-10-6c-2-6-5-12-6-20z" fill="#8a74c0" />
          <path d="M14 5l-6 2 6 3z" fill="#f07828" />
          <path d="M18 30v4h-4M24 30v4h5" stroke="#f07828" strokeWidth="2" fill="none" />
          <circle cx="17" cy="6" r="1.200" fill="#111" />
        </svg>
      </div>
      <div className="ml-[3px] flex">
        <Slot>
          <div className="relative w-[32px] h-[30px]">
            <div className="absolute right-[1px] top-0 w-[22px] h-[22px] rounded-[2px] bg-[#e8e8e8]" />
            <div className="absolute left-0 bottom-0 w-[22px] h-[22px] rounded-[2px] bg-[#777]/90 border border-[#555]" />
          </div>
        </Slot>
        <Slot dot>
          <Edge badge={<div className="w-[14px] h-[14px] rounded-full bg-[#999] border-2 border-[#555]" />} />
        </Slot>
        <Slot dot>
          <svg width="30" height="30" viewBox="0 0 30 30">
            <path d="M0 4a1 1 0 0 1 1-1h8l3 3h-12z" fill="#d49a12" />
            <path d="M0 6h30v22a1 1 0 0 1-1 1H1a1 1 0 0 1-1-1z" fill="#fcd35c" />
            <rect x="5" y="19" width="20" height="10" rx="1" fill="#1a8fe0" />
            <rect x="10" y="23" width="10" height="1.500" fill="#0c5a9e" />
          </svg>
        </Slot>
        <Slot>
          <svg width="31" height="30" viewBox="0 0 31 30">
            <path d="M12 3L22 0l9 6v18a3 3 0 0 1-3 3H11z" fill="#1f8fe0" />
            <path d="M13 3l9-3 9 6-9 6z" fill="#50c8f5" />
            <path d="M22 12l9-6v10z" fill="#1560b0" />
            <rect x="0" y="9" width="16" height="15" rx="1" fill="#0a5cb0" />
            <ellipse cx="8" cy="16.500" rx="4" ry="5" fill="none" stroke="#fff" strokeWidth="2.200" />
          </svg>
        </Slot>
        <Slot>
          <Edge badge={<div className="w-[15px] h-[15px] rounded-full bg-[#4f3d86] flex items-center justify-center"><div className="w-[8px] h-[8px] rounded-full bg-[#cfcfcf] border border-[#333]" /></div>} />
        </Slot>
        <Slot><Chrome badge="V" color="bg-[#0b5a9e]" /></Slot>
        <Slot>
          <Edge badge={<div className="w-[14px] h-[14px] rounded-full bg-[#0e7a6a] flex items-center justify-center"><div className="w-[7px] h-[7px] rounded-sm bg-[#eee]" /></div>} />
        </Slot>
        <Slot dot>
          <svg width="26" height="30" viewBox="0 0 26 30">
            <path d="M6 1h14l3 3 3 1-1 5 1 3-3 9-7 6c-2 1-3 1-4 0l-7-6-3-9 1-3-1-5 3-1z" fill="#f1481e" />
            <path d="M6 9l5-1 2 1 2-1 5 1 1 2-3 5 1 3-5 4h-2l-5-4 1-3-3-5z" fill="#fff" />
            <path d="M8 12l3 2M18 12l-3 2M13 14v5" stroke="#f1481e" strokeWidth="1.300" fill="none" />
          </svg>
        </Slot>
        <Slot dot>
          <Edge badge={<div className="w-[15px] h-[16px] rounded-full bg-[#7ac4d8] flex items-center justify-center"><div className="w-[5px] h-[9px] bg-[#b08ac8]" /></div>} />
        </Slot>
        <Slot>
          <svg width="30" height="30" viewBox="0 0 30 30">
            <path d="M14 1C4 2 0 9 0 15c0 7 5 13 14 14C7 26 4 21 4 15S7 4 14 1z" fill="#e8871e" />
            <circle cx="17" cy="15" r="13" fill="#2c2255" />
            <path d="M4 11h26M4 15h26M4 19h26" stroke="#e8e8f4" strokeWidth="2" />
          </svg>
        </Slot>
        <Slot>
          <Edge badge={<div className="w-[14px] h-[16px] rounded-[3px] bg-[#e0a060] flex items-center justify-center"><div className="w-[8px] h-[10px] bg-[#1f8a9e]" /></div>} />
        </Slot>
        <Slot dot>
          <Edge badge={<div className="w-[14px] h-[15px] rounded-full bg-[#0e6a4e] flex items-center justify-center"><div className="w-[5px] h-[8px] bg-[#a8d880]" /></div>} />
        </Slot>
        <Slot dot><Chrome badge="V" color="bg-[#a63412]" /></Slot>
        <Slot dot><Chrome badge="V" color="bg-[#6c4bb0]" /></Slot>
        <Slot dot><Chrome badge="V" color="bg-[#5d4037]" /></Slot>
        <Slot dot>
          <svg width="30" height="30" viewBox="0 0 30 30">
            <rect x="0" y="0" width="22" height="22" rx="2" fill="#eeeeee" />
            <path d="M4 4h12v14H4z" fill="#cfcfcf" />
            <path d="M4 4h12M4 4v12" fill="none" stroke="#e04020" strokeWidth="2" strokeDasharray="2 2" />
            <path d="M14 16l6 6" stroke="#9aa4ad" strokeWidth="2" />
            <circle cx="26" cy="18" r="3" fill="none" stroke="#1a8fe0" strokeWidth="1.8" />
            <circle cx="14" cy="27" r="3" fill="none" stroke="#1a8fe0" strokeWidth="1.8" />
            <path d="M24 20l-8 4" stroke="#1a8fe0" strokeWidth="1.5" />
          </svg>
        </Slot>
        <div className="w-[49px] h-[50px] ml-[3px] mt-[4px] rounded-[5px] bg-[#2c2c2c] border border-[#333] flex flex-col items-center pt-[9px]">
          <ExcelLogo size={30} />
          <div className="mt-[3px] w-[19px] h-[4px] rounded-full bg-[#4cc2ff]" />
        </div>
      </div>
      <div className="ml-[88px] flex items-center">
        <svg width="14" height="8" viewBox="0 0 14 8"><path d="M1 7l6-6 6 6" fill="none" stroke="#f0f0f0" strokeWidth="1.8" /></svg>
        <svg width="21" height="18" viewBox="0 0 21 18" className="ml-[23px]">
          <path d="M5 14c-5 0-5-6-1-6 1-5 8-6 10-2 5-1 7 8 2 8z" fill="#8a8a8a" />
          <path d="M2 1l17 16" stroke="#e8e8e8" strokeWidth="1.2" />
        </svg>
        <div className="ml-[12px] w-[50px] text-center text-[14px] leading-[20px]">
          <div>ENG</div>
          <div>IN</div>
        </div>
        <svg width="21" height="17" viewBox="0 0 21 17" className="ml-[11px]">
          <path d="M1 6c5-6 14-6 19 0M4 9.500c3.500-4 9.500-4 13 0M7 12.500c2-2 5-2 7 0" fill="none" stroke="#f0f0f0" strokeWidth="1.500" />
          <circle cx="10.500" cy="15" r="1.500" fill="#f0f0f0" />
        </svg>
        <svg width="21" height="18" viewBox="0 0 21 18" className="ml-[10px]">
          <path d="M1 6h4l5-4v14l-5-4H1z" fill="none" stroke="#f0f0f0" strokeWidth="1.200" />
          <path d="M13 6c1.500 2 1.500 4 0 6M16 3c3 4 3 8 0 12" fill="none" stroke="#f0f0f0" strokeWidth="1.200" />
        </svg>
        <svg width="23" height="14" viewBox="0 0 23 14" className="ml-[8px]">
          <rect x="1" y="1" width="18" height="12" rx="3" fill="none" stroke="#f0f0f0" strokeWidth="1.300" />
          <rect x="3" y="3" width="9" height="8" rx="1" fill="#f0f0f0" />
          <rect x="20" y="5" width="2" height="4" fill="#f0f0f0" />
        </svg>
        <div className="ml-[10px] w-[86px] text-right text-[14px] leading-[20px] whitespace-nowrap">
          <div>04:35 PM</div>
          <div>28-08-2025</div>
        </div>
        <svg width="18" height="20" viewBox="0 0 18 20" className="ml-[10px]">
          <path d="M9 2c-4 0-5 3-5 7 0 3-2 4-3 6h16c-1-2-3-3-3-6M6 17c1 2 5 2 6 0" fill="none" stroke="#f0f0f0" strokeWidth="1.200" />
          <text x="9" y="11" fontSize="8" fill="#f0f0f0" fontFamily="Liberation Sans">z</text>
        </svg>
      </div>
    </div>
  );
}

export default function App() {
  return (
    <div className="w-[1920px] h-[1080px] overflow-hidden bg-[#070707] font-['Noto_Sans',sans-serif] flex flex-col">
      <TitleBar />
      <TabRow />
      <Ribbon />
      <FormulaBar />
      <Sheet />
      <SheetBar />
      <StatusBar />
      <Taskbar />
    </div>
  );
}
